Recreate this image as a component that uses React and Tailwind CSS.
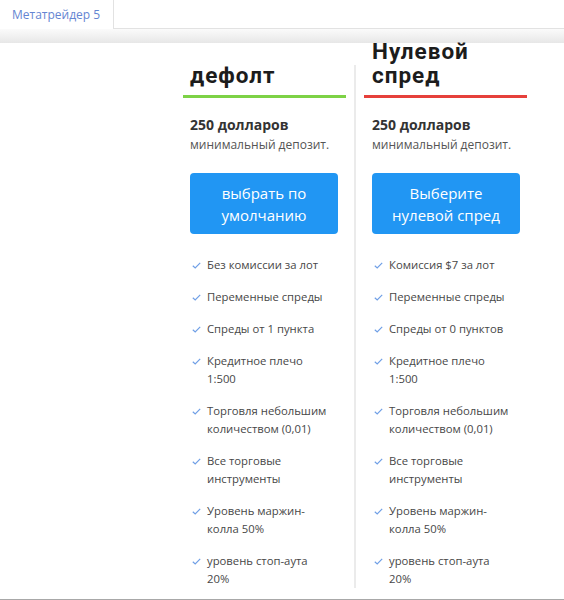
import React from "react";

const Check = () => (
  <svg width="9" height="7" viewBox="0 0 9 7" className="mt-[6px] shrink-0">
    <path d="M0.8 3.8 L3.2 6 L8.2 0.8" fill="none" stroke="#6f9fe6" strokeWidth="1.2" />
  </svg>
);

const Item = ({ lines }) => (
  <li className="flex items-start gap-[6px] pl-[2px]">
    <Check />
    <span className="text-[11.3px] leading-[18px] text-[#474747]">
      {lines.map((l, i) => (
        <React.Fragment key={i}>
          {i > 0 && <br />}
          {l}
        </React.Fragment>
      ))}
    </span>
  </li>
);

const Column = ({ title, color, button, items, pl }) => (
  <div className="w-[163px] flex flex-col">
    <div className={`h-[44px] flex items-end ${pl}`}>
      <h2 className="text-[22.5px] leading-[24px] font-bold tracking-[1px] text-[#1c1c1c]" style={{ fontFamily: "Roboto, sans-serif" }}>
        {title.map((t, i) => (
          <React.Fragment key={i}>
            {i > 0 && <br />}
            {t}
          </React.Fragment>
        ))}
      </h2>
    </div>
    <div className={`mt-[8px] h-[3px] ${color}`} />
    <div className={`${pl} pt-[18px]`}>
      <div className="text-[14px] leading-[18px] font-bold text-[#333]">250 долларов</div>
      <div className="mt-[2px] text-[12px] leading-[18px] text-[#555]">минимальный депозит.</div>
      <button className="mt-[19px] w-[148px] h-[61px] rounded-[4px] bg-[#2196f3] text-white text-[15px] leading-[22px] flex items-center justify-center text-center">
        <span>
          {button[0]}
          <br />
          {button[1]}
        </span>
      </button>
      <ul className="mt-[22px] flex flex-col gap-[14px]">
        {items.map((it, i) => (
          <Item key={i} lines={it} />
        ))}
      </ul>
    </div>
  </div>
);

export default function App() {
  return (
    <div className="h-[600px] overflow-hidden bg-white border-b border-[#a8a8a8] flex flex-col" style={{ fontFamily: '"Open Sans", sans-serif' }}>
      <div className="flex h-[29px]">
        <div className="w-[114px] h-[29px] border-r border-[#e2e2e2] flex items-center pl-[12px] text-[12px] text-[#6485d2]">
          Метатрейдер 5
        </div>
        <div className="flex-1 h-[29px] border-b border-[#e2e2e2]" />
      </div>
      <div className="h-[14px] bg-gradient-to-b from-[#fbfbfb] to-[#e7e7e7]" />
      <div className="flex ml-[183px]">
        <Column
          title={["дефолт"]}
          color="bg-[#7dd246]"
          pl="pl-[7px]"
          button={["выбрать по", "умолчанию"]}
          items={[
            ["Без комиссии за лот"],
            ["Переменные спреды"],
            ["Спреды от 1 пункта"],
            ["Кредитное плечо", "1:500"],
            ["Торговля небольшим", "количеством (0,01)"],
            ["Все торговые", "инструменты"],
            ["Уровень маржин-", "колла 50%"],
            ["уровень стоп-аута", "20%"],
          ]}
        />
        <div className="mx-[8px] w-[2px] bg-[#ebebeb] mt-[22px] h-[523px]" />
        <Column
          title={["Нулевой", "спред"]}
          color="bg-[#e6403b]"
          pl="pl-[8px]"
          button={["Выберите", "нулевой спред"]}
          items={[
            ["Комиссия $7 за лот"],
            ["Переменные спреды"],
            ["Спреды от 0 пунктов"],
            ["Кредитное плечо", "1:500"],
            ["Торговля небольшим", "количеством (0,01)"],
            ["Все торговые", "инструменты"],
            ["Уровень маржин-", "колла 50%"],
            ["уровень стоп-аута", "20%"],
          ]}
        />
      </div>
    </div>
  );
}
